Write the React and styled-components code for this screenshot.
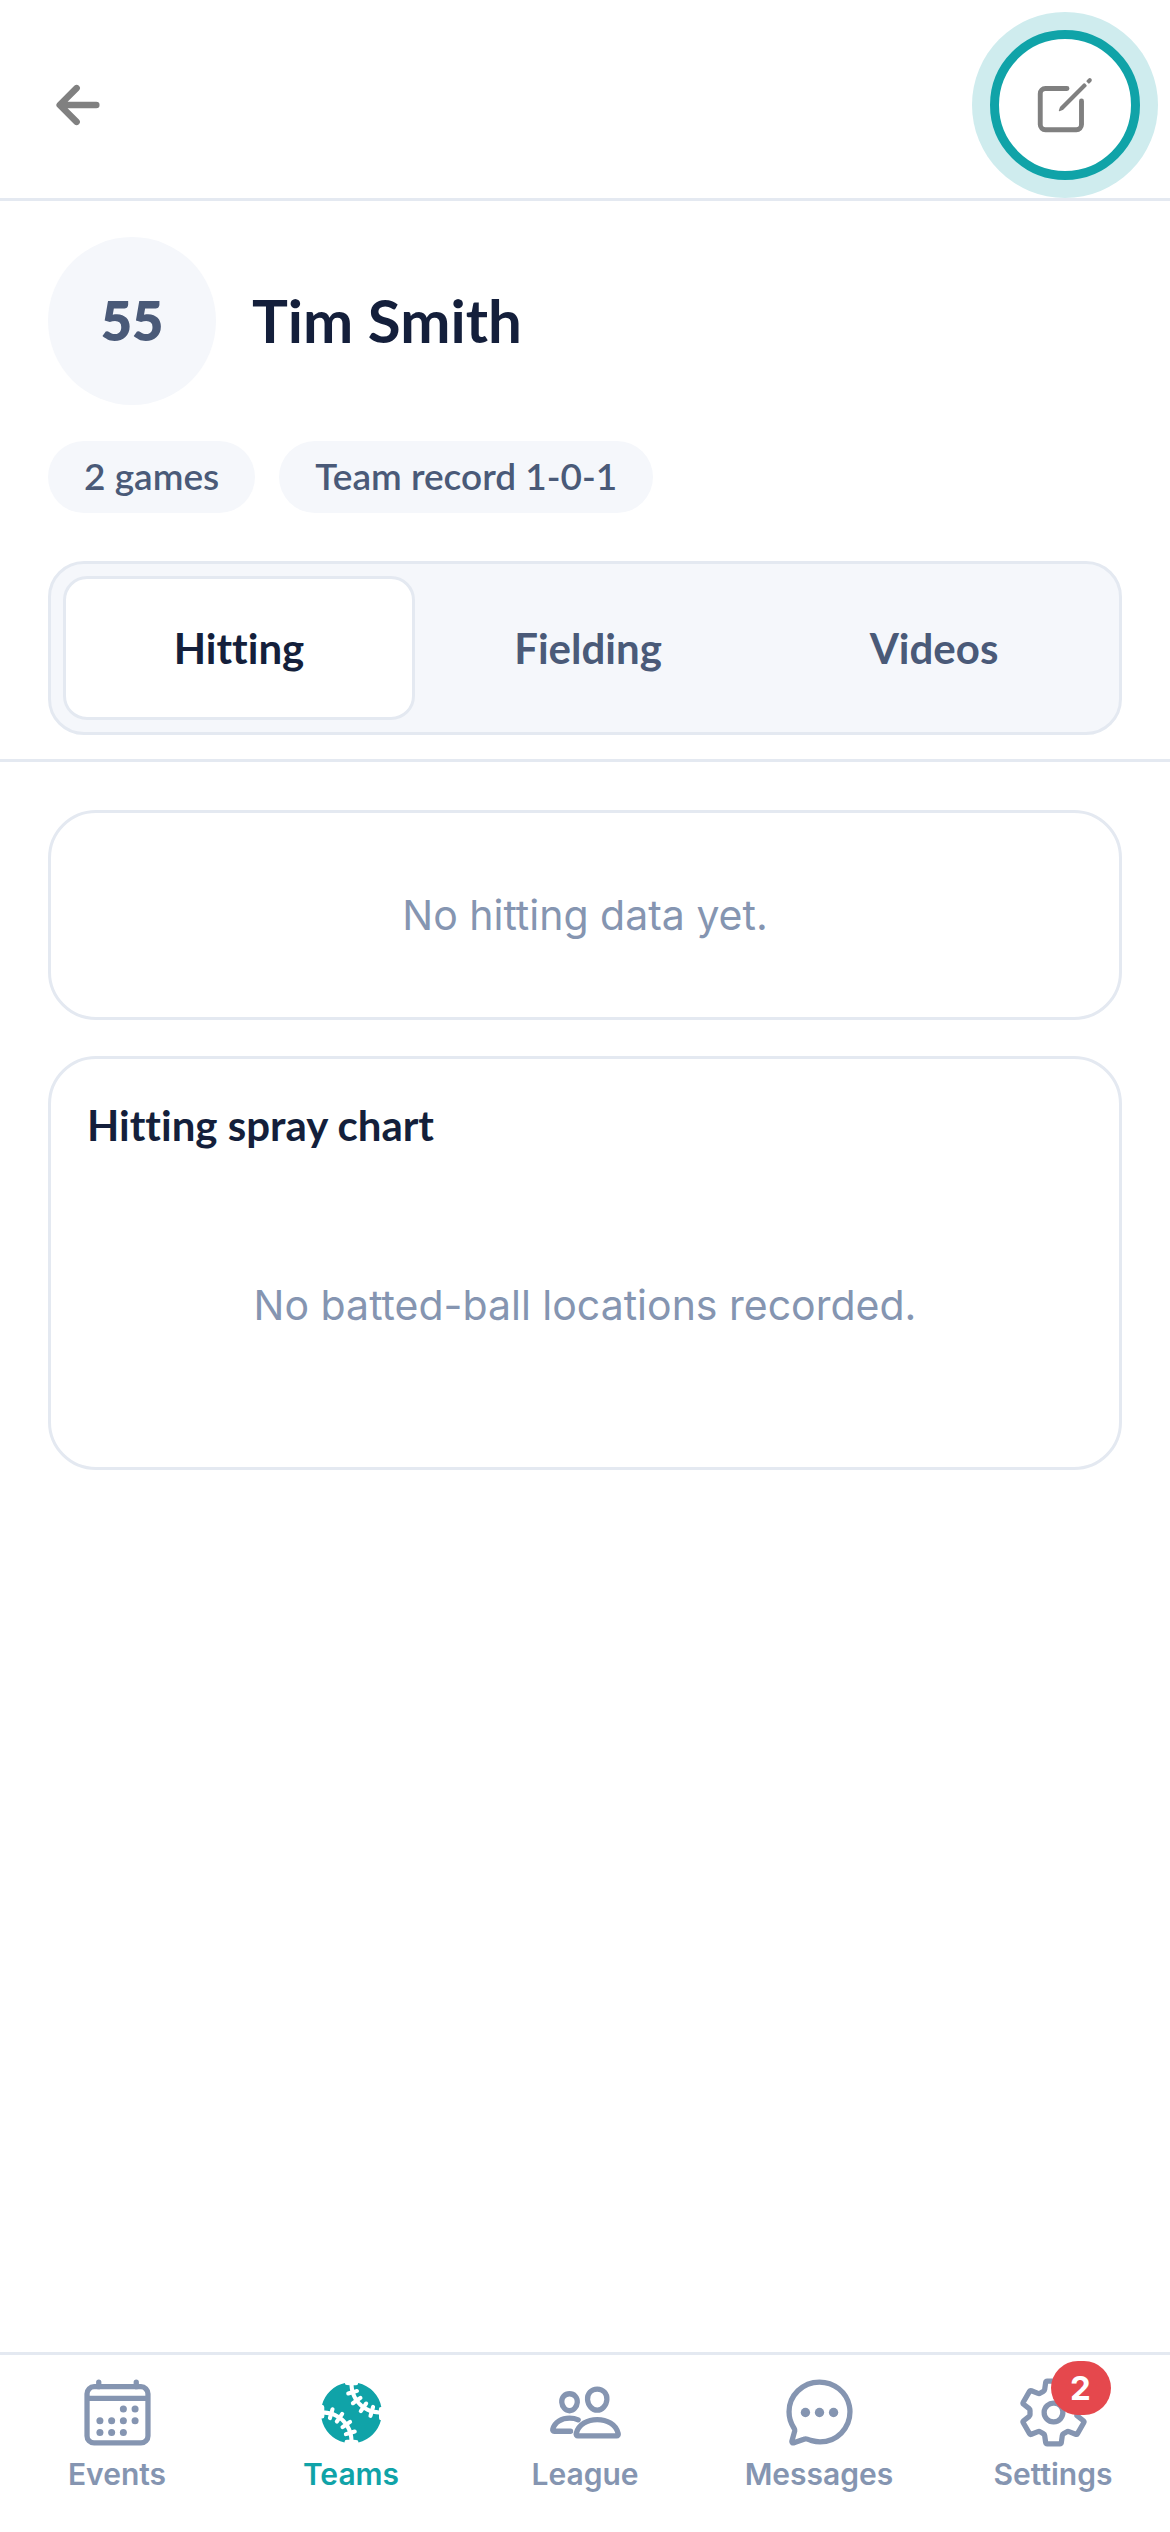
import { useState } from 'react';
import styled, { createGlobalStyle } from 'styled-components';
import {
  IoArrowBack,
  IoBaseball,
  IoCalendarOutline,
  IoChatbubbleEllipsesOutline,
  IoCreateOutline,
  IoPeopleOutline,
  IoSettingsOutline,
} from 'react-icons/io5';

const tabs = ['Hitting', 'Fielding', 'Videos'];

const navItems = [
  { label: 'Events', icon: IoCalendarOutline },
  { label: 'Teams', icon: IoBaseball, active: true },
  { label: 'League', icon: IoPeopleOutline },
  { label: 'Messages', icon: IoChatbubbleEllipsesOutline },
  { label: 'Settings', icon: IoSettingsOutline, badge: 2 },
];

const App = () => {
  const [activeTab, setActiveTab] = useState('Hitting');

  return (
    <Screen>
      <GlobalStyle />
      <Header>
        <BackButton aria-label="Back">
          <IoArrowBack />
        </BackButton>
        <EditButton aria-label="Edit player">
          <IoCreateOutline />
        </EditButton>
      </Header>

      <PlayerSection>
        <PlayerRow>
          <JerseyNumber>55</JerseyNumber>
          <PlayerName>Tim Smith</PlayerName>
        </PlayerRow>
        <PillRow>
          <Pill>2 games</Pill>
          <Pill>Team record 1-0-1</Pill>
        </PillRow>
        <TabBar role="tablist">
          {tabs.map((tab) => (
            <Tab
              key={tab}
              role="tab"
              aria-selected={tab === activeTab}
              $active={tab === activeTab}
              onClick={() => setActiveTab(tab)}
            >
              {tab}
            </Tab>
          ))}
        </TabBar>
      </PlayerSection>

      <Content>
        <Card>
          <EmptyText>No hitting data yet.</EmptyText>
        </Card>
        <Card>
          <CardTitle>Hitting spray chart</CardTitle>
          <EmptyText $tall>No batted-ball locations recorded.</EmptyText>
        </Card>
      </Content>

      <BottomNav>
        {navItems.map(({ label, icon: Icon, active, badge }) => (
          <NavLink key={label} href={`#${label.toLowerCase()}`} $active={active}>
            <NavIcon>
              <Icon />
              {badge && <Badge>{badge}</Badge>}
            </NavIcon>
            {label}
          </NavLink>
        ))}
      </BottomNav>
    </Screen>
  );
};

// Styled Components
const GlobalStyle = createGlobalStyle`
  :root {
    --ink: #141f3b;
    --slate: #4a5a78;
    --muted: #8595b1;
    --teal: #10a3a8;
    --line: #e4e9f1;
    --surface: #f5f7fb;
    --heading-font: Lato, 'Open Sans', sans-serif;
    --body-font: Inter, Roboto, sans-serif;
  }

  * {
    box-sizing: border-box;
  }

  body {
    margin: 0;
    background: #fff;
    font-family: var(--body-font);
    font-variant-ligatures: none;
  }

  button {
    padding: 0;
    border: none;
    background: none;
    font-variant-ligatures: none;
    cursor: pointer;
  }
`;

const Screen = styled.div`
  min-height: 100vh;
  display: flex;
  flex-direction: column;
`;

const Header = styled.header`
  display: flex;
  align-items: center;
  justify-content: space-between;
  padding: 30px 30px 18px 48px;
  border-bottom: 3px solid var(--line);
`;

const BackButton = styled.button`
  display: flex;
  color: #808080;
  font-size: 60px;

  path {
    stroke-width: 56px;
  }
`;

const EditButton = styled.button`
  display: flex;
  align-items: center;
  justify-content: center;
  width: 150px;
  height: 150px;
  border: 9px solid var(--teal);
  border-radius: 50%;
  background: #fff;
  box-shadow: 0 0 0 18px #cfecee;
  color: #808080;
  font-size: 66px;

  [stroke-width='32'] {
    stroke-width: 38px;
  }
`;

const PlayerSection = styled.section`
  padding: 36px 48px 24px;
  border-bottom: 3px solid var(--line);
`;

const PlayerRow = styled.div`
  display: flex;
  align-items: center;
  gap: 36px;
`;

const JerseyNumber = styled.div`
  display: flex;
  align-items: center;
  justify-content: center;
  width: 168px;
  height: 168px;
  padding-bottom: 2px;
  border-radius: 50%;
  background: var(--surface);
  color: var(--slate);
  font-family: var(--heading-font);
  font-size: 54px;
  font-weight: 800;
`;

const PlayerName = styled.h1`
  margin: 0;
  padding-bottom: 2px;
  color: var(--ink);
  font-family: var(--heading-font);
  font-size: 60px;
  font-weight: 700;
`;

const PillRow = styled.div`
  display: flex;
  gap: 24px;
  margin-top: 36px;
`;

const Pill = styled.span`
  padding: 11px 36px 13px;
  border-radius: 36px;
  background: var(--surface);
  color: var(--slate);
  font-family: var(--heading-font);
  font-size: 37px;
  font-weight: 600;
  line-height: 48px;
`;

const TabBar = styled.div`
  display: flex;
  margin-top: 48px;
  padding: 12px;
  border: 3px solid var(--line);
  border-radius: 36px;
  background: var(--surface);
`;

const Tab = styled.button`
  flex: 1 1 0;
  height: 144px;
  border: ${(props) => (props.$active ? '3px solid var(--line)' : 'none')};
  border-radius: 24px;
  background: ${(props) => (props.$active ? '#fff' : 'transparent')};
  color: ${(props) => (props.$active ? 'var(--ink)' : 'var(--slate)')};
  font-family: var(--heading-font);
  font-size: 42px;
  font-weight: 700;
`;

const Content = styled.main`
  flex: 1;
  display: flex;
  flex-direction: column;
  gap: 36px;
  padding: 48px;
`;

const Card = styled.section`
  padding: 36px;
  border: 3px solid var(--line);
  border-radius: 48px;
`;

const CardTitle = styled.h2`
  margin: 0 0 24px;
  color: var(--ink);
  font-family: var(--heading-font);
  font-size: 42px;
  font-weight: 700;
  line-height: 60px;
`;

const EmptyText = styled.p`
  margin: 0;
  padding: ${(props) => (props.$tall ? '96px' : '36px')} 0;
  color: var(--muted);
  font-size: 41px;
  line-height: 60px;
  text-align: center;
`;

const BottomNav = styled.nav`
  position: sticky;
  bottom: 0;
  display: flex;
  padding: 20px 0 40px;
  border-top: 3px solid var(--line);
  background: #fff;
`;

const NavLink = styled.a`
  flex: 1 1 0;
  display: flex;
  flex-direction: column;
  align-items: center;
  gap: 6px;
  color: ${(props) => (props.$active ? 'var(--teal)' : 'var(--muted)')};
  font-size: 30px;
  font-weight: 600;
  line-height: 36px;
  text-decoration: none;
`;

const NavIcon = styled.span`
  position: relative;
  display: flex;
  font-size: 75px;

  [stroke-width='32'] {
    stroke-width: 36px;
  }
`;

const Badge = styled.span`
  position: absolute;
  top: -14px;
  left: 35px;
  min-width: 60px;
  height: 54px;
  border-radius: 27px;
  background: #e5484d;
  color: #fff;
  font-size: 33px;
  font-weight: 700;
  line-height: 54px;
  text-align: center;
`;

export default App;
